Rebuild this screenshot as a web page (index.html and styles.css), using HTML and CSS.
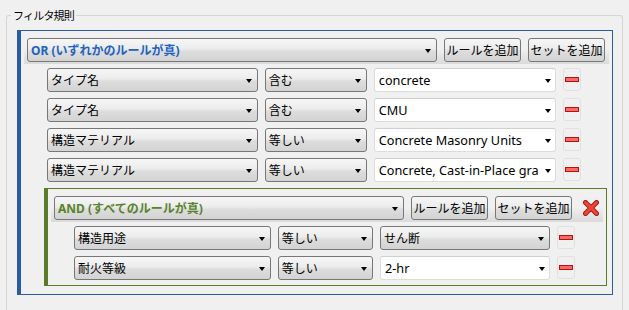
FILE: index.html
```html
<!DOCTYPE html>
<html lang="ja">
<head>
    <meta charset="UTF-8">
    <title>フィルタ規則</title>
    <link rel="stylesheet" href="styles.css">
</head>
<body>

<fieldset class="group">
    <legend>フィルタ規則</legend>

    <div class="rule-set rule-set-or">
        <div class="set-header">
            <div class="dropdown set-mode">OR (いずれかのルールが真)<span class="caret"></span></div>
            <button class="btn">ルールを追加</button>
            <button class="btn">セットを追加</button>
        </div>
        <div class="rule-list">
            <div class="rule">
                <div class="dropdown">タイプ名<span class="caret"></span></div>
                <div class="dropdown">含む<span class="caret"></span></div>
                <div class="combo"><span class="value">concrete</span><span class="caret"></span></div>
                <button class="remove"><span class="bar"></span></button>
            </div>
            <div class="rule">
                <div class="dropdown">タイプ名<span class="caret"></span></div>
                <div class="dropdown">含む<span class="caret"></span></div>
                <div class="combo"><span class="value">CMU</span><span class="caret"></span></div>
                <button class="remove"><span class="bar"></span></button>
            </div>
            <div class="rule">
                <div class="dropdown">構造マテリアル<span class="caret"></span></div>
                <div class="dropdown">等しい<span class="caret"></span></div>
                <div class="combo"><span class="value">Concrete Masonry Units</span><span class="caret"></span></div>
                <button class="remove"><span class="bar"></span></button>
            </div>
            <div class="rule">
                <div class="dropdown">構造マテリアル<span class="caret"></span></div>
                <div class="dropdown">等しい<span class="caret"></span></div>
                <div class="combo"><span class="value">Concrete, Cast-in-Place gra</span><span class="caret"></span></div>
                <button class="remove"><span class="bar"></span></button>
            </div>

            <div class="rule-set rule-set-and">
                <div class="set-header">
                    <div class="dropdown set-mode">AND (すべてのルールが真)<span class="caret"></span></div>
                    <button class="btn">ルールを追加</button>
                    <button class="btn">セットを追加</button>
                    <button class="delete-set" title="削除">
                        <svg width="16" height="16" viewBox="0 0 16 16">
                            <path d="M2.5 2.5 L13.5 13.5 M13.5 2.5 L2.5 13.5" stroke="#a51a12" stroke-width="5" stroke-linecap="round"/>
                            <path d="M2.5 2.5 L13.5 13.5 M13.5 2.5 L2.5 13.5" stroke="#f0453a" stroke-width="3" stroke-linecap="round"/>
                        </svg>
                    </button>
                </div>
                <div class="rule-list">
                    <div class="rule">
                        <div class="dropdown">構造用途<span class="caret"></span></div>
                        <div class="dropdown">等しい<span class="caret"></span></div>
                        <div class="dropdown">せん断<span class="caret"></span></div>
                        <button class="remove"><span class="bar"></span></button>
                    </div>
                    <div class="rule">
                        <div class="dropdown">耐火等級<span class="caret"></span></div>
                        <div class="dropdown">等しい<span class="caret"></span></div>
                        <div class="combo"><span class="value">2-hr</span><span class="caret"></span></div>
                        <button class="remove"><span class="bar"></span></button>
                    </div>
                </div>
            </div>
        </div>
    </div>
</fieldset>

</body>
</html>
```

FILE: styles.css
```css
body {
    margin: 0;
    height: 310px;
    background: #f0f0f0;
    font-family: "Noto Sans", "Noto Sans CJK JP", sans-serif;
    font-size: 12px;
    color: #000;
    overflow: hidden;
}
.group {
    box-sizing: border-box;
    height: 303px;
    margin: 7px 6px 0;
    padding: 7px 9px 0 10px;
    border: 1px solid #d5d5d5;
    border-bottom: none;
    border-radius: 3px 3px 0 0;
}
.group legend {
    margin-left: -6px;
    padding: 0 2px;
    font-family: "Noto Sans CJK JP", sans-serif;
    font-size: 11px;
    line-height: 16px;
    letter-spacing: -0.8px;
}
.rule-set {
    border: 1px solid #2b5ba8;
    border-left-width: 4px;
    padding: 5px 3px 5px;
}
.rule-set-or {
    padding-bottom: 4px;
}
.rule-set-and {
    border-color: #5b7b2b;
    margin-bottom: 4px;
}
.set-header {
    display: flex;
    align-items: center;
    gap: 7px;
    padding: 2px 4px 2px 3px;
    background: linear-gradient(#f0f0f0 45%, #dadada);
}
.set-mode {
    flex: 1;
    font-weight: bold;
    color: #2262bd;
}
.rule-set-and .set-mode {
    color: #57832b;
}
.rule-list {
    display: flex;
    flex-direction: column;
    gap: 6px;
    padding: 4px 2px 0 20px;
}
.rule {
    display: grid;
    grid-template-columns: 42.6fr 20.6fr 36.8fr 18px;
    column-gap: 7px;
    height: 24px;
    margin: 0 26px 0 3px;
}
.dropdown, .combo {
    display: flex;
    align-items: center;
    height: 24px;
    box-sizing: border-box;
    padding: 0 5px 0 3px;
    border-radius: 3px;
    white-space: nowrap;
    overflow: hidden;
}
.dropdown {
    border: 1px solid #777;
    background: linear-gradient(#f6f6f6, #ececec 45%, #dddddd 55%, #d3d3d3);
    justify-content: space-between;
}
.combo {
    border: 1px solid #dcdcdc;
    border-top-color: #cfcfcf;
    background: #fff;
    padding-left: 4px;
    padding-right: 4px;
    font-size: 12.7px;
}
.combo .value {
    flex: 1;
    overflow: hidden;
    margin-right: 5px;
}
.caret {
    flex: none;
    width: 0;
    height: 0;
    border-left: 3.5px solid transparent;
    border-right: 3.5px solid transparent;
    border-top: 4px solid #000;
    margin-top: 1px;
}
.btn {
    height: 24px;
    width: 77px;
    padding: 0;
    font: inherit;
    color: #000;
    border: 1px solid #777;
    border-radius: 3px;
    background: linear-gradient(#f6f6f6, #ececec 45%, #dddddd 55%, #d3d3d3);
    white-space: nowrap;
}
.remove {
    display: flex;
    align-items: center;
    justify-content: center;
    height: 23px;
    padding: 0;
    border: 1px solid #e0e0e0;
    border-radius: 3px;
    background: #f0f0f0;
}
.remove .bar {
    width: 14px;
    height: 5px;
    box-sizing: border-box;
    border: 1px solid #b3120e;
    background: #f76a66;
}
.delete-set {
    display: flex;
    align-items: center;
    justify-content: center;
    width: 17px;
    height: 20px;
    margin-left: 3px;
    padding: 0;
    border: none;
    background: none;
}
```
